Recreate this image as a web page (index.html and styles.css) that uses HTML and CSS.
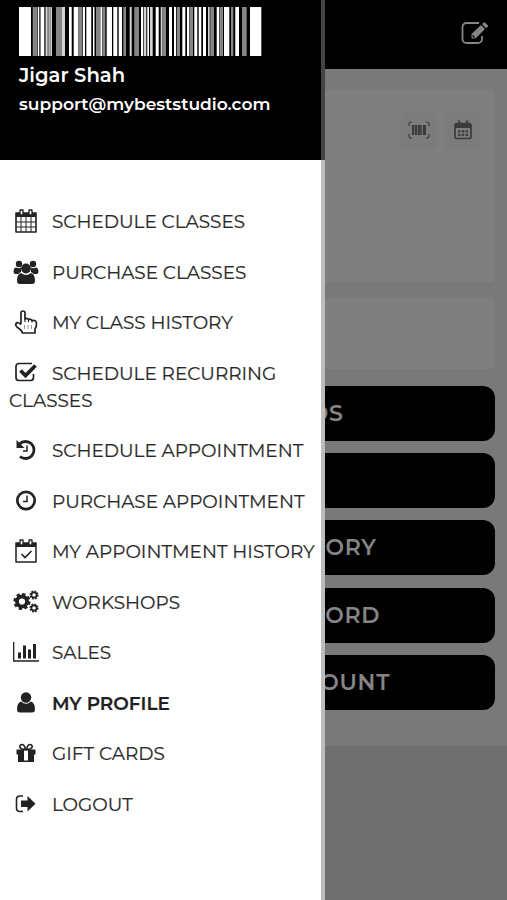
FILE: index.html
```
<!DOCTYPE html>
<html lang="en">

<head>
    <meta charset="UTF-8">
    <meta name="viewport" content="width=device-width, initial-scale=1.0">
    <title>My Profile</title>
    <link rel="stylesheet" href="styles.css">
</head>

<body>
    <div class="page">
        <header class="topbar">
            <svg class="edit-icon" viewBox="0 0 28 24">
                <path d="M18 2H5.500A4 4 0 0 0 1.500 6V18A4 4 0 0 0 5.500 22H17A4 4 0 0 0 21 18V15" fill="none" stroke="currentColor" stroke-width="1.800" />
                <path d="M10.500 13 20 4 24 8 14.500 17.500H10.500ZM21 3 22.800 1.500Q23.500 1 24.200 1.700L26.800 4.300Q27.500 5 26.800 5.700L25 7.200Z" fill="currentColor" />
                <path d="M12 14V16H14" fill="none" stroke="#000" stroke-width="1" />
            </svg>
        </header>
        <main class="content">
            <section class="card profile-card">
                <button class="icon-button">
                    <svg viewBox="0 0 22 18" width="22" height="18">
                        <path d="M1 5V3Q1 1 3 1H4M18 1H19Q21 1 21 3V5M21 13V15Q21 17 19 17H18M4 17H3Q1 17 1 15V13" fill="none" stroke="currentColor" stroke-width="1.200" />
                        <path d="M4 4H6V14H4ZM6.700 4H9V14H6.700ZM9.700 4H12.700V14H9.700ZM13.200 4H14.200V14H13.200ZM15 4H18V14H15Z" fill="currentColor" />
                    </svg>
                </button>
                <button class="icon-button">
                    <svg viewBox="0 0 18 20" width="18" height="20">
                        <path d="M5 .5V4M13 .5V4" stroke="currentColor" stroke-width="1.800" />
                        <rect x="1" y="3.500" width="16" height="15" rx="2" fill="none" stroke="currentColor" stroke-width="1.700" />
                        <path d="M1 4H17V8H1Z" fill="currentColor" />
                        <path d="M4 11.300H14M4 14.800H14" stroke="currentColor" stroke-width="2.200" stroke-dasharray="2.400 1.400" />
                    </svg>
                </button>
            </section>
            <section class="card small-card"></section>
            <div class="buttons">
                <button class="big-button">CREDIT CARDS</button>
                <button class="big-button">SALES</button>
                <button class="big-button">PURCHASE HISTORY</button>
                <button class="big-button">CHANGE PASSWORD</button>
                <button class="big-button delete-button">DELETE MY ACCOUNT</button>
            </div>
        </main>
    </div>

    <!-- side menu -->
    <aside class="drawer">
        <div class="user-box">
            <svg class="barcode" viewBox="0 0 243 49" preserveAspectRatio="none">
                <path d="M0 0H12V49H0ZM18.700 0H20.300V49H18.700ZM21.500 0H25.300V49H21.500ZM29.500 0H30.700V49H29.500ZM50 0H52.700V49H50ZM54.700 0H59.300V49H54.700ZM64 0H66V49H64ZM67.300 0H72.300V49H67.300ZM74 0H75.500V49H74ZM81.300 0H83V49H81.300ZM87.700 0H93V49H87.700ZM94.300 0H98.300V49H94.300ZM99.700 0H103V49H99.700ZM122 0H124.300V49H122ZM128.300 0H130V49H128.300ZM136.700 0H139.700V49H136.700ZM150 0H153V49H150ZM155 0H157V49H155ZM163.300 0H166.300V49H163.300ZM168 0H170V49H168ZM175.300 0H178.300V49H175.300ZM179.700 0H182.300V49H179.700ZM184 0H187V49H184ZM197.700 0H200.300V49H197.700ZM205 0H210.300V49H205ZM216.300 0H220V49H216.300ZM231 0H242.300V49H231Z" fill="#fff" />
                <path d="M26.500 0H28.700V49H26.500ZM31.300 0H33V49H31.300ZM43 0H46V49H43ZM110.700 0H112.700V49H110.700ZM125 0H127.300V49H125ZM131 0H133.700V49H131ZM141.700 0H143.500V49H141.700ZM189 0H190.700V49H189Z" fill="#d2d2d2" />
                <path d="M13.700 0H18V49H13.700ZM37 0H43V49H37ZM59.300 0H63.500V49H59.300ZM77 0H81.300V49H77ZM83.300 0H86.300V49H83.300ZM104.300 0H107V49H104.300ZM115.300 0H120V49H115.300ZM143.500 0H147V49H143.500ZM157.700 0H161V49H157.700ZM170.300 0H174V49H170.300ZM191.300 0H195V49H191.300ZM201 0H204V49H201ZM212 0H214.300V49H212ZM223 0H227.700V49H223Z" fill="#858585" />
            </svg>
            <div class="user-name">Jigar Shah</div>
            <div class="user-email">support@mybeststudio.com</div>
        </div>
        <nav class="menu">
            <a class="menu-item"><span class="icon"><svg viewBox="0 0 26 26"><path d="M3 5H23V24H3Z" fill="none" stroke="currentColor" stroke-width="1.600" stroke-linejoin="round" /><path d="M3 5H23V9H3Z" fill="currentColor" /><path d="M3 14H23M3 19H23M8 9V24M13 9V24M18 9V24" stroke="currentColor" stroke-width="1" /><path d="M7 2h3v5H7zM16 2h3v5h-3z" fill="#fff" stroke="currentColor" stroke-width="1.300" stroke-linejoin="round" /></svg></span>SCHEDULE CLASSES</a>
            <a class="menu-item"><span class="icon"><svg viewBox="0 0 26 26"><g fill="currentColor"><circle cx="6" cy="5" r="3.200" /><circle cx="20" cy="5" r="3.200" /><path d="M3 8.500Q6 10 8 8.500V13Q6 14 5.500 15H2.500Q.5 15 .5 12.500 1 8.500 3 8.500ZM23 8.500Q20 10 18 8.500V13Q20 14 20.500 15H23.500Q25.500 15 25.500 12.500 25 8.500 23 8.500Z" /><circle cx="13" cy="9.500" r="4.900" /><path d="M8 14Q13 18 18 14 22 15 22 22 22 25 19 25H7Q4 25 4 22 4 15 8 14Z" /></g></svg></span>PURCHASE CLASSES</a>
            <a class="menu-item"><span class="icon"><svg viewBox="0 0 26 26"><path d="M8 15V4Q8 2 10 2T12 4V10Q14 8.500 15.500 10.500 17.500 9.500 19 11.500 23.500 10.500 23.500 15 23.500 18 22 20V24H9.500Q9 21.500 4.500 18.500 2 16.500 3 14.500 4.500 12.500 8 15.500" fill="none" stroke="currentColor" stroke-width="1.700" stroke-linejoin="round" /><path d="M12 10V13M15.500 10.500V13M19 11.500V13.500" stroke="currentColor" stroke-width="1.200" /><path d="M11.500 16V20M15 16V20M18.500 16V20" stroke="currentColor" stroke-width=".8" opacity=".6" /></svg></span>MY CLASS HISTORY</a>
            <a class="menu-item"><span class="icon"><svg viewBox="0 0 26 26"><path d="M19 3.500H6Q3 3.500 3 6.500V17.500Q3 20.500 6 20.500H17.500Q20.500 20.500 20.500 17.500V14" fill="none" stroke="currentColor" stroke-width="1.700" /><path d="M7.500 10.500 12.500 15.500 22.500 5.500" fill="none" stroke="currentColor" stroke-width="3.800" /></svg></span>SCHEDULE RECURRING CLASSES</a>
            <a class="menu-item"><span class="icon"><svg viewBox="0 0 26 26"><path d="M6.500 7A8.500 8.500 0 1 1 7 19.500" fill="none" stroke="currentColor" stroke-width="2.800" /><path d="M3.500 3V11H11.500Z" fill="currentColor" /><path d="M14 8.500V14H10" fill="none" stroke="currentColor" stroke-width="1.500" /></svg></span>SCHEDULE APPOINTMENT</a>
            <a class="menu-item"><span class="icon"><svg viewBox="0 0 26 26"><circle cx="13" cy="12.500" r="8.700" fill="none" stroke="currentColor" stroke-width="2.700" /><path d="M14 7.500V13.500H10" fill="none" stroke="currentColor" stroke-width="1.500" /></svg></span>PURCHASE APPOINTMENT</a>
            <a class="menu-item wide"><span class="icon"><svg viewBox="0 0 26 26"><path d="M3 5H23V24H3Z" fill="none" stroke="currentColor" stroke-width="1.500" stroke-linejoin="round" /><path d="M3 5H23V9H3Z" fill="currentColor" /><path d="M7 2h3v5H7zM16 2h3v5h-3z" fill="#fff" stroke="currentColor" stroke-width="1.300" stroke-linejoin="round" /><path d="M8.500 16 12 19.500 18.500 13" fill="none" stroke="currentColor" stroke-width="1.600" /></svg></span>MY APPOINTMENT HISTORY</a>
            <a class="menu-item"><span class="icon"><svg viewBox="0 0 26 26"><g fill="none" stroke="currentColor"><circle cx="9" cy="12.500" r="5" stroke-width="3.800" /><circle cx="9" cy="12.500" r="7.300" stroke-width="2.600" stroke-dasharray="3.200 2.533" /><circle cx="21" cy="6" r="2.600" stroke-width="1.700" /><circle cx="21" cy="6" r="3.800" stroke-width="1.600" stroke-dasharray="1.700 1.284" /><circle cx="21" cy="19" r="2.600" stroke-width="1.700" /><circle cx="21" cy="19" r="3.800" stroke-width="1.600" stroke-dasharray="1.700 1.284" /></g></svg></span>WORKSHOPS</a>
            <a class="menu-item"><span class="icon"><svg viewBox="0 0 26 26"><path d="M.7 3V22H26" fill="none" stroke="currentColor" stroke-width="1.300" /><path d="M5 13.500h3v6H5zM10 6.500h3v13h-3zM15 10.500h3v9h-3zM20 5h3v14.500h-3z" fill="currentColor" /></svg></span>SALES</a>
            <a class="menu-item active"><span class="icon"><svg viewBox="0 0 26 26"><circle cx="13" cy="7.500" r="5.200" fill="currentColor" /><path d="M8 11.500Q13 16 18 11.500 22 13 22 19 22 22.500 19 22.500H7Q4 22.500 4 19 4 13 8 11.500Z" fill="currentColor" /></svg></span>MY PROFILE</a>
            <a class="menu-item"><span class="icon"><svg viewBox="0 0 26 26"><path d="M3.500 9.500H22.500V14.500H21V22H5V14.500H3.500Z" fill="currentColor" /><path d="M11 10.500h4v10h-4z" fill="#fff" /><path d="M12.500 9.500C5 9.500 6 4.500 9 4.500 11 4.500 12 6.500 12.500 9.500H13.500C14 6.500 15 4.500 17 4.500 20 4.500 21 9.500 13.500 9.500" fill="none" stroke="currentColor" stroke-width="1.600" /></svg></span>GIFT CARDS</a>
            <a class="menu-item"><span class="icon"><svg viewBox="0 0 26 26"><path d="M10 5H7Q3.500 5 3.500 8.500V17Q3.500 20.500 7 20.500H10" fill="none" stroke="currentColor" stroke-width="1.600" /><path d="M8 9.500H14.500V5L22.500 12.800 14.500 20.500V16H8Z" fill="currentColor" /></svg></span>LOGOUT</a>
        </nav>
    </aside>
</body>

</html>
```
FILE: styles.css
```
* {
    box-sizing: border-box;
}

body {
    margin: 0;
    height: 900px;
    overflow: hidden;
    background-color: #6f6f6f;
    font-family: "Montserrat", "Inter", sans-serif;
}

.page {
    height: 746px;
    background-color: #797979;
}

.topbar {
    height: 69px;
    background-color: #000;
    display: flex;
    justify-content: flex-end;
    align-items: center;
    padding: 0 18px 3px 0;
    color: #858585;
}

.edit-icon {
    width: 28px;
    height: 24px;
}

.content {
    padding: 21px 12px 0;
}

.card {
    background-color: #7f7f7f;
    border-radius: 5px;
}

.profile-card {
    height: 192px;
    display: flex;
    justify-content: flex-end;
    align-items: flex-start;
    gap: 8px;
    padding: 22px 14px;
}

.icon-button {
    width: 36px;
    height: 38px;
    border: 0;
    border-radius: 4px;
    background-color: #7c7c7c;
    color: #3b3b3b;
    display: flex;
    justify-content: center;
    align-items: center;
    padding: 0 0 2px;
}

.small-card {
    height: 71px;
    margin-top: 16px;
}

.buttons {
    display: flex;
    flex-direction: column;
    gap: 12.2px;
    margin-top: 17px;
}

.big-button {
    height: 55px;
    border: 0;
    border-radius: 12px;
    background-color: #000;
    color: #858585;
    font-family: inherit;
    font-size: 22px;
    font-weight: 600;
    letter-spacing: 0.75px;
}

.delete-button {
    padding-left: 17px;
}

/* side menu */
.drawer {
    position: absolute;
    top: 0;
    left: 0;
    width: 325px;
    height: 900px;
    background-color: #fff;
    border-right: 4px solid #bdbdbd;
}

.user-box {
    width: 325px;
    height: 160px;
    padding: 7px 18px 0 19px;
    background-color: #000;
    border-right: 4px solid #444;
    color: #fff;
}

.barcode {
    display: block;
    width: 243px;
    height: 49px;
}

.user-name {
    margin-top: 6px;
    font-size: 19.6px;
    line-height: 27px;
    font-weight: 600;
}

.user-email {
    margin-top: 1px;
    font-size: 17.1px;
    line-height: 27px;
    font-weight: 600;
}

.menu {
    padding-top: 36.3px;
}

.menu-item {
    display: block;
    padding: 11.775px 0 11.775px 9px;
    color: #2a2a2a;
    font-size: 18.45px;
    line-height: 27px;
    -webkit-text-stroke: 0.2px #2a2a2a;
}

.menu-item.wide {
    white-space: nowrap;
}

.menu-item.active {
    color: #1f1f1f;
    font-weight: 600;
}

.icon {
    display: inline-block;
    width: 34px;
    height: 20px;
    margin-right: 9px;
    text-align: center;
    vertical-align: -3px;
    line-height: 0;
    color: #222;
}

.icon svg {
    width: 26px;
    height: 26px;
    margin: -3px 0;
}
```
